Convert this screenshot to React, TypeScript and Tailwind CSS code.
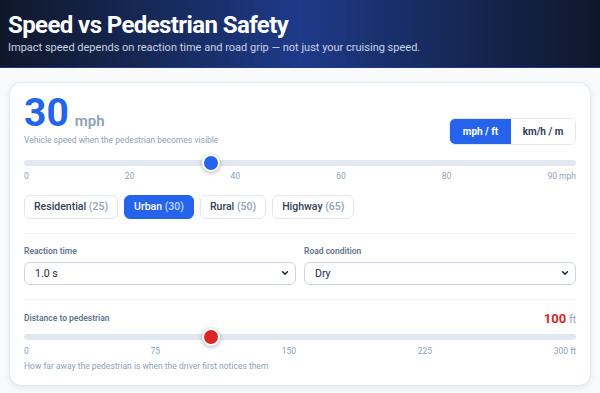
import React, { useState } from "react";

const PRESETS = [
  { label: "Residential", speed: 25 },
  { label: "Urban", speed: 30 },
  { label: "Rural", speed: 50 },
  { label: "Highway", speed: 65 },
];

const SPEED_TICKS = ["0", "20", "40", "60", "80", "90 mph"];
const DIST_TICKS = ["0", "75", "150", "225", "300 ft"];

function Slider({ value, max, color }: { value: number; max: number; color: string }) {
  const frac = value / max;
  return (
    <div className="relative h-[18px] flex items-center">
      <div className="h-1.5 w-full rounded-full bg-[#e2e8f0]" />
      <div
        className={`absolute top-0 h-[18px] w-[18px] rounded-full border-2 border-white shadow-[0_1px_4px_rgba(15,23,42,0.35)] ${color}`}
        style={{ left: `calc((100% - 18px) * ${frac})` }}
      />
    </div>
  );
}

function Ticks({ items }: { items: string[] }) {
  return (
    <div className="flex justify-between text-[8.5px] leading-3 text-slate-400">
      {items.map((t) => (
        <span key={t}>{t}</span>
      ))}
    </div>
  );
}

function Chevron() {
  return (
    <svg
      className="pointer-events-none absolute right-[7px] top-1/2 -translate-y-1/2"
      width="8"
      height="8"
      viewBox="0 0 10 10"
      fill="none"
      stroke="#1e293b"
      strokeWidth="2"
      strokeLinecap="round"
      strokeLinejoin="round"
    >
      <path d="M2 3.5 5 6.5 8 3.5" />
    </svg>
  );
}

export default function App() {
  const [preset, setPreset] = useState(30);
  const [unit, setUnit] = useState("imperial");

  return (
    <div className="min-h-screen bg-[#f8fafc] font-['Roboto',sans-serif]">
      {/* HEADER */}
      <header className="bg-gradient-to-r from-[#0f172a] via-[#1e3a8a] to-[#0f172a] px-2 pt-[10px] pb-[11px] border-b border-[#1e3a8a]">
        <h1 className="text-2xl font-bold leading-[30px] tracking-tight text-white">
          Speed vs Pedestrian Safety
        </h1>
        <p className="text-[11px] leading-4 text-slate-300">
          Impact speed depends on reaction time and road grip — not just your cruising speed.
        </p>
      </header>

      <main className="px-[9px] pt-[14px]">
        <div className="rounded-xl border border-[#e2e8f0] bg-white px-[14px] pt-[11px] pb-[12px] shadow-[0_2px_6px_rgba(15,23,42,0.08)]">
          {/* SPEED */}
          <div className="flex items-end justify-between">
            <div>
              <div className="flex items-baseline">
                <span className="text-[39px] font-bold leading-none text-[#2563eb]">30</span>
                <span className="ml-1.5 text-[15px] font-semibold text-slate-400">mph</span>
              </div>
              <p className="text-[8.5px] leading-[14px] text-slate-400">
                Vehicle speed when the pedestrian becomes visible
              </p>
            </div>
            <div className="mb-[2px] flex h-[27px] overflow-hidden rounded-md border border-[#e2e8f0] text-[10px] font-bold">
              <button
                onClick={() => setUnit("imperial")}
                className={`w-[61px] ${unit === "imperial" ? "bg-[#2563eb] text-white" : "bg-white text-slate-700"}`}
              >
                mph / ft
              </button>
              <button
                onClick={() => setUnit("metric")}
                className={`w-[64px] ${unit === "metric" ? "bg-[#2563eb] text-white" : "bg-white text-slate-700"}`}
              >
                km/h / m
              </button>
            </div>
          </div>

          <div className="mt-[7px]">
            <Slider value={30} max={90} color="bg-[#2563eb]" />
          </div>
          <div className="mt-[-2px]">
            <Ticks items={SPEED_TICKS} />
          </div>

          <div className="mt-[13px] flex gap-1.5">
            {PRESETS.map((p) => {
              const active = p.speed === preset;
              return (
                <button
                  key={p.label}
                  onClick={() => setPreset(p.speed)}
                  className={`h-6 rounded-md border px-[9px] text-[10.5px] font-medium ${
                    active
                      ? "border-[#2563eb] bg-[#2563eb] text-white"
                      : "border-[#e2e8f0] bg-white text-slate-700"
                  }`}
                >
                  {p.label}{" "}
                  <span className={active ? "text-blue-200" : "text-slate-400"}>({p.speed})</span>
                </button>
              );
            })}
          </div>

          {/* SELECTS */}
          <div className="mt-[14px] border-t border-slate-100 pt-[10px] grid grid-cols-2 gap-2">
            <label className="block">
              <span className="block text-[8.5px] font-semibold leading-[14px] text-slate-500">Reaction time</span>
              <div className="relative mt-[2px]">
                <select className="h-[23px] w-full appearance-none rounded-md border border-[#cbd5e1] bg-white pl-[10px] text-[10.5px] text-slate-800 outline-none">
                  <option>1.0 s</option>
                  <option>1.5 s</option>
                  <option>2.0 s</option>
                </select>
                <Chevron />
              </div>
            </label>
            <label className="block">
              <span className="block text-[8.5px] font-semibold leading-[14px] text-slate-500">Road condition</span>
              <div className="relative mt-[2px]">
                <select className="h-[23px] w-full appearance-none rounded-md border border-[#cbd5e1] bg-white pl-[10px] text-[10.5px] text-slate-800 outline-none">
                  <option>Dry</option>
                  <option>Wet</option>
                  <option>Icy</option>
                </select>
                <Chevron />
              </div>
            </label>
          </div>

          {/* DISTANCE */}
          <div className="mt-[14px] border-t border-slate-100 pt-[11px]">
            <div className="flex h-[14px] items-center justify-between">
              <span className="text-[8.5px] font-semibold text-slate-500">Distance to pedestrian</span>
              <span className="flex items-baseline gap-[3px]">
                <span className="text-[13px] font-bold text-[#dc2626]">100</span>
                <span className="text-[10px] text-slate-400">ft</span>
              </span>
            </div>
            <div className="mt-[3px]">
              <Slider value={100} max={300} color="bg-[#dc2626]" />
            </div>
            <div className="mt-[-1px]">
              <Ticks items={DIST_TICKS} />
            </div>
            <p className="mt-[2px] text-[8.5px] leading-[14px] text-slate-400">
              How far away the pedestrian is when the driver first notices them
            </p>
          </div>
        </div>
      </main>
    </div>
  );
}
